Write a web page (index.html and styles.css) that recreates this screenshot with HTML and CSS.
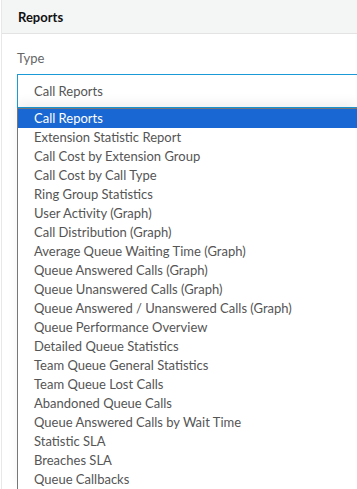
FILE: index.html
```html
<!DOCTYPE html>
<html lang="en">

<head>
	<meta charset="UTF-8">
	<meta name="viewport" content="width=device-width, initial-scale=1.0">
	<title>Reports</title>
	<link rel="stylesheet" href="styles.css">
</head>

<body>
	<div class="panel">
		<div class="panel-head">Reports</div>
		<div class="panel-body">
			<label class="field-label">Type</label>
			<div class="select">Call Reports</div>
			<ul class="options">
				<li class="current">Call Reports</li>
				<li>Extension Statistic Report</li>
				<li>Call Cost by Extension Group</li>
				<li>Call Cost by Call Type</li>
				<li>Ring Group Statistics</li>
				<li>User Activity (Graph)</li>
				<li>Call Distribution (Graph)</li>
				<li>Average Queue Waiting Time (Graph)</li>
				<li>Queue Answered Calls (Graph)</li>
				<li>Queue Unanswered Calls (Graph)</li>
				<li>Queue Answered / Unanswered Calls (Graph)</li>
				<li>Queue Performance Overview</li>
				<li>Detailed Queue Statistics</li>
				<li>Team Queue General Statistics</li>
				<li>Team Queue Lost Calls</li>
				<li>Abandoned Queue Calls</li>
				<li>Queue Answered Calls by Wait Time</li>
				<li>Statistic SLA</li>
				<li>Breaches SLA</li>
				<li>Queue Callbacks</li>
			</ul>
		</div>
	</div>
</body>

</html>
```
FILE: styles.css
```css
* {
	padding: 0;
	margin: 0;
	list-style: none;
	box-sizing: border-box;
}

body {
	font-family: 'Lato', 'Liberation Sans', sans-serif;
	font-size: 13px;
	color: #555;
	background: #fff;
	overflow: hidden;
}

.panel {
	border-left: 1px solid #e8e8e8;
	margin-left: 1px;
	height: 489px;
	overflow: hidden;
}

.panel-head {
	height: 34px;
	background: #f4f5f5;
	border-bottom: 1px solid #e3e3e3;
	padding: 9px 0 0 16px;
	font-weight: bold;
	color: #111;
}

.panel-body {
	padding: 16px 0 0 15px;
}

.field-label {
	display: block;
	height: 24px;
	color: #666;
}

/* the box and its list run on past the right edge */
.select {
	height: 34px;
	border: 1px solid #1a9bd7;
	border-right: 0;
	padding: 8px 0 0 16px;
	color: #555;
}

.options {
	border-left: 1px solid #777;
	border-top: 1px solid #777;
	box-shadow: 0 -6px 10px rgba(0, 0, 0, 0.06);
	position: relative;
}

.options li {
	height: 19px;
	line-height: 19px;
	padding-left: 16px;
	color: #555;
}

.options li.current {
	background: #1967d2;
	color: #fff;
}
```
